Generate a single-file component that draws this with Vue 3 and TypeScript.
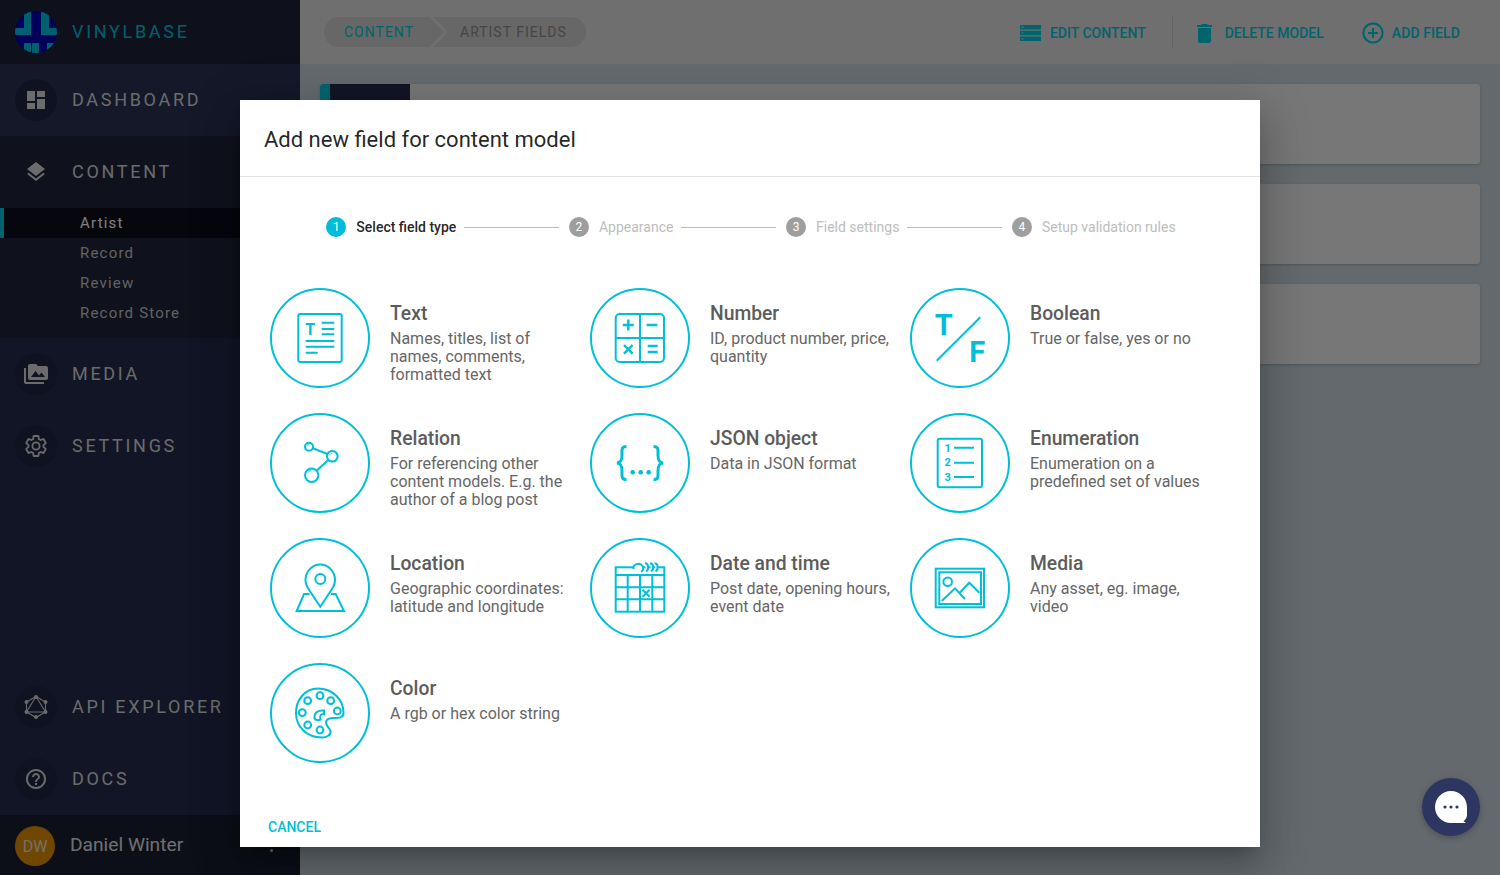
<script setup lang="ts">
interface Field { title: string; desc: string; icon: string }
interface Nav { label: string; icon: string; hot?: boolean; plain?: boolean }

const mi = (d: string) => `<path fill="currentColor" d="${d}"/>`

const top: Nav[] = [
  { label: 'DASHBOARD', hot: true, icon: mi('M3 13h8V3H3v10zm0 8h8v-6H3v6zm10 0h8V11h-8v10zm0-18v6h8V3h-8z') },
]
const content: Nav = { label: 'CONTENT', plain: true, icon: mi('M11.99 18.54l-7.37-5.73L3 14.07l9 7 9-7-1.63-1.27-7.38 5.74zM12 16l7.36-5.73L21 9l-9-7-9 7 1.63 1.27L12 16z') }
const subs = ['Artist', 'Record', 'Review', 'Record Store']
const mid: Nav[] = [
  { label: 'MEDIA', icon: mi('M2 6H0v5h.01L0 20c0 1.1.9 2 2 2h18v-2H2V6zm20-2h-8l-2-2H6c-1.1 0-1.99.9-1.99 2L4 16c0 1.1.9 2 2 2h16c1.1 0 2-.9 2-2V6c0-1.1-.9-2-2-2zM7 15l4.5-6 3.5 4.51 2.5-3.01L21 15H7z') },
  { label: 'SETTINGS', icon: `<g fill="none" stroke="currentColor" stroke-width="1.8"><path d="M19.43 12.98c.04-.32.07-.64.07-.98s-.03-.66-.07-.98l2.11-1.65c.19-.15.24-.42.12-.64l-2-3.46c-.12-.22-.39-.3-.61-.22l-2.49 1c-.52-.4-1.08-.73-1.69-.98l-.38-2.65C14.46 2.18 14.25 2 14 2h-4c-.25 0-.46.18-.49.42l-.38 2.65c-.61.25-1.17.59-1.69.98l-2.49-1c-.23-.09-.49 0-.61.22l-2 3.46c-.13.22-.07.49.12.64l2.11 1.65c-.04.32-.07.65-.07.98s.03.66.07.98l-2.11 1.65c-.19.15-.24.42-.12.64l2 3.46c.12.22.39.3.61.22l2.49-1c.52.4 1.08.73 1.69.98l.38 2.65c.03.24.24.42.49.42h4c.25 0 .46-.18.49-.42l.38-2.65c.61-.25 1.17-.59 1.69-.98l2.49 1c.23.09.49 0 .61-.22l2-3.46c.12-.22.07-.49-.12-.64l-2.11-1.65z"/><circle cx="12" cy="12" r="3.6"/></g>` },
]
const bottom: Nav[] = [
  { label: 'API EXPLORER', icon: `<g fill="none" stroke="currentColor" stroke-width="1.1"><path d="M12 1.5 21.5 7v10L12 22.5 2.5 17V7zM12 1.5 21.5 17H2.5z"/></g><g fill="currentColor"><circle cx="12" cy="2" r="2"/><circle cx="21.5" cy="7" r="2"/><circle cx="21.5" cy="17" r="2"/><circle cx="12" cy="22" r="2"/><circle cx="2.5" cy="17" r="2"/><circle cx="2.5" cy="7" r="2"/></g>` },
  { label: 'DOCS', icon: mi('M11 18h2v-2h-2v2zm1-16C6.48 2 2 6.48 2 12s4.48 10 10 10 10-4.48 10-10S17.52 2 12 2zm0 18c-4.41 0-8-3.59-8-8s3.59-8 8-8 8 3.59 8 8-3.59 8-8 8zm0-14c-2.21 0-4 1.79-4 4h2c0-1.1.9-2 2-2s2 .9 2 2c0 2-3 1.75-3 5h2c0-2.25 3-2.5 3-5 0-2.21-1.79-4-4-4z') },
]

const steps = ['Select field type', 'Appearance', 'Field settings', 'Setup validation rules']

const label = (x: number, y: number, size: number, t: string, anchor = 'middle') =>
  `<text x="${x}" y="${y}" font-size="${size}" font-family="Roboto" font-weight="700" fill="currentColor" stroke="none" text-anchor="${anchor}">${t}</text>`

const fields: Field[] = [
  { title: 'Text', desc: 'Names, titles, list of names, comments, formatted text', icon:
    `<rect x="28.3" y="26" width="43.4" height="48" rx="2"/><path d="M51.7 34.7h12.6M51.7 41h12.6M51.7 46.3h12.6M35.7 53h28.6M35.7 58.7h28.6M35.7 64.7h12"/>` + label(40.3, 46.5, 16, 'T') },
  { title: 'Number', desc: 'ID, product number, price, quantity', icon:
    `<rect x="25.7" y="26" width="48.3" height="48" rx="4"/><path d="M50 26v48M25.7 50H74"/><g stroke-width="2.4"><path d="M32.8 37h11M38.3 31.5v11M56.7 37h10.6M34 57l8.6 8.6M42.6 57 34 65.6M57.7 58h10M57.7 64h10"/></g>` },
  { title: 'Boolean', desc: 'True or false, yes or no', icon:
    `<path d="M26.7 72.7 70.3 29.3"/>` + label(33.8, 47, 29, 'T') + label(67.2, 74.3, 29, 'F') },
  { title: 'Relation', desc: 'For referencing other content models. E.g. the author of a blog post', icon:
    `<circle cx="39" cy="33.7" r="4"/><circle cx="62.3" cy="43.3" r="5.3"/><circle cx="41.7" cy="62.3" r="6.7"/><path d="M42.8 35.3 57.5 41M58.2 47 46.6 57.7"/><g stroke-width="1"><path d="M37 32.5a2.4 2.4 0 0 1 1.6-1M59.8 41.5a3.2 3.2 0 0 1 2-1.3M38 59.5a4.4 4.4 0 0 1 2.8-2"/></g>` },
  { title: 'JSON object', desc: 'Data in JSON format', icon:
    `<g stroke-width="3"><path d="M36.5 33.5C31 33.5 32 37 32 42 32 47 31 49.5 27 50 31 50.5 32 53 32 58 32 63 31 66.5 36.5 66.5"/><path d="M63.5 33.5C69 33.5 68 37 68 42 68 47 69 49.5 73 50 69 50.5 68 53 68 58 68 63 69 66.5 63.5 66.5"/></g><g fill="currentColor" stroke="none"><circle cx="42.7" cy="59.3" r="2.3"/><circle cx="50.7" cy="59.3" r="2.3"/><circle cx="58.7" cy="59.3" r="2.3"/></g>` },
  { title: 'Enumeration', desc: 'Enumeration on a predefined set of values', icon:
    `<rect x="27.7" y="25.7" width="44.3" height="48.6" rx="2"/><path d="M44 34.7h20M44 49.7h20M44 64h20"/>` + label(37.7, 38.7, 11, '1') + label(37.7, 53.4, 11, '2') + label(37.7, 68, 11, '3') },
  { title: 'Location', desc: 'Geographic coordinates: latitude and longitude', icon:
    `<circle cx="50.3" cy="41" r="5"/><path d="M50.3 68.7 39.5 52.5C37 49 35.5 46 35.5 42 35.5 33.5 42 26.5 50.3 26.5S65 33.5 65 42C65 46 63.5 49 61 52.5Z"/><path d="M39.5 56H34L26.7 73H74L65.7 56H61"/>` },
  { title: 'Date and time', desc: 'Post date, opening hours, event date', icon:
    `<rect x="25.7" y="29.3" width="48.6" height="44.4"/><path d="M25.7 37H74.3M25.7 49.3H74.3M25.7 61.3H74.3M37.7 37V73.7M50 37V73.7M62.3 37V73.7M52.5 51.8 59.5 58.8M59.5 51.8 52.5 58.8"/><path fill="#fff" d="M43.5 31C42.5 26 50 24 52.5 28 54 30.5 53 33 51 33.7"/><path fill="#fff" d="M55 25.3C58.5 25.3 59.5 31.5 56 33.5M60 25.3C63.5 25.3 64.5 31.5 61 33.5M64.5 25.3C68 25.3 69 31.5 65.5 33.5"/>` },
  { title: 'Media', desc: 'Any asset, eg. image, video', icon:
    `<rect x="25.7" y="30.7" width="48.3" height="38.6"/><rect x="29.3" y="34.3" width="41.7" height="31.7"/><circle cx="37.7" cy="43.7" r="4.3"/><path d="M31.7 63 45 50.3 55 61M49.3 55.3 59.3 44.7 69.3 54.7"/>` },
  { title: 'Color', desc: 'A rgb or hex color string', icon:
    `<path d="M48 25.5C34 25.5 26 38 26 50 26 64 37 74.5 52 74.5 57 74.5 61 72 60.5 68 60 65 55.5 63 56 59 56.5 55.5 60 55 64 55 69 55 73.5 55 73.5 50 73.5 36 62 25.5 48 25.5Z"/><circle cx="37.7" cy="37.7" r="3.4"/><circle cx="50" cy="32.7" r="3.4"/><circle cx="60.7" cy="37.7" r="3.4"/><circle cx="67.3" cy="48" r="3.4"/><circle cx="32.3" cy="49.7" r="3.4"/><circle cx="37.7" cy="62" r="3.4"/><circle cx="50" cy="67" r="3.4"/><path d="M44.5 55C44 49.5 48 47 54 47.5V51C51 50.5 49.5 52.5 50.5 56.5 48.5 57.5 45 57.5 44.5 55Z"/>` },
]
</script>

<template>
  <div class="page">
    <aside class="side">
      <div class="brand">
        <svg class="logo" viewBox="0 0 42 42">
          <defs><clipPath id="lc"><circle cx="21" cy="21" r="21" /></clipPath></defs>
          <g clip-path="url(#lc)">
            <rect width="42" height="42" fill="#0000b4" />
            <path fill="#00c0e0" d="M9 0h7v24H0v-7h9zM26 0h8v17h8v7H26zM9 32h7v10H9zM17 32h7v10h-7zM32 32h8v10h-8z" />
          </g>
        </svg>
        <span class="brand-name">VINYLBASE</span>
      </div>
      <div v-for="n in top" :key="n.label" class="nav hot">
        <span class="nav-ic"><svg viewBox="0 0 24 24" v-html="n.icon" /></span>
        <span class="nav-txt">{{ n.label }}</span>
      </div>
      <div class="group">
        <div class="nav">
          <span class="nav-ic plain"><svg viewBox="0 0 24 24" v-html="content.icon" /></span>
          <span class="nav-txt">{{ content.label }}</span>
        </div>
        <ul class="subs">
          <li v-for="(s, i) in subs" :key="s" :class="{ on: i === 0 }">{{ s }}</li>
        </ul>
      </div>
      <div v-for="n in mid" :key="n.label" class="nav">
        <span class="nav-ic"><svg viewBox="0 0 24 24" v-html="n.icon" /></span>
        <span class="nav-txt">{{ n.label }}</span>
      </div>
      <div class="spring"></div>
      <div v-for="n in bottom" :key="n.label" class="nav">
        <span class="nav-ic"><svg viewBox="0 0 24 24" v-html="n.icon" /></span>
        <span class="nav-txt">{{ n.label }}</span>
      </div>
      <div class="user">
        <span class="avatar">DW</span>
        <span class="user-name">Daniel Winter</span>
        <span class="kebab"></span>
      </div>
    </aside>

    <main class="main">
      <header class="head">
        <div class="crumbs">
          <span class="crumb first">CONTENT</span>
          <svg class="chev" viewBox="0 0 20 30"><path d="M3-1 19.5 15 3 31" /></svg>
          <span class="crumb">ARTIST FIELDS</span>
        </div>
        <div class="actions">
          <a class="act">
            <svg class="a-ic edit" viewBox="0 0 21 16"><path fill-rule="evenodd" d="M0 0h21v4.4H0zM1.5 1.6h2v1.2h-2zM0 5.8h21v4.4H0zM1.5 7.4h2v1.2h-2zM0 11.6h21V16H0zM1.5 13.2h2v1.2h-2z" /></svg>
            EDIT CONTENT
          </a>
          <span class="sep"></span>
          <a class="act del">
            <svg class="a-ic trash" viewBox="0 0 15 19"><path d="M5 0h5l.7 1H15v2H0V1h4.3zM1 4h13v13a2 2 0 0 1-2 2H3a2 2 0 0 1-2-2z" /></svg>
            DELETE MODEL
          </a>
          <a class="act add">
            <svg class="a-ic plus" viewBox="0 0 22 22"><circle cx="11" cy="11" r="9.6" /><path d="M11 6v10M6 11h10" /></svg>
            ADD FIELD
          </a>
        </div>
      </header>
      <section class="cards">
        <div v-for="c in 3" :key="c" class="card">
          <span class="accent"></span>
          <span class="thumb"></span>
        </div>
      </section>
    </main>

    <div class="scrim">
      <div class="modal">
        <h2 class="m-title">Add new field for content model</h2>
        <div class="m-body">
          <ol class="stepper">
            <template v-for="(s, i) in steps" :key="s">
              <li class="step" :class="{ active: i === 0 }">
                <span class="dot">{{ i + 1 }}</span>
                <span>{{ s }}</span>
              </li>
              <li v-if="i < steps.length - 1" class="rule"></li>
            </template>
          </ol>
          <div class="grid">
            <div v-for="f in fields" :key="f.title" class="field">
              <span class="disc"><svg viewBox="0 0 100 100" v-html="f.icon" /></span>
              <div class="f-txt">
                <div class="f-title">{{ f.title }}</div>
                <div class="f-desc">{{ f.desc }}</div>
              </div>
            </div>
          </div>
        </div>
        <div class="m-foot"><button class="cancel">CANCEL</button></div>
      </div>
    </div>

    <button class="chat" aria-label="Chat">
      <svg viewBox="0 0 32 32"><path fill="#fff" d="M16 0C7.2 0 0 7.2 0 16s7.2 16 16 16h14.5l.3-.3-2.4-1.4c2.2-1.4 3.6-4 3.6-6.3V16C32 7.2 24.8 0 16 0Z" /><circle cx="10" cy="16" r="1.6" fill="#2d3561" /><circle cx="16" cy="16" r="1.6" fill="#2d3561" /><circle cx="22" cy="16" r="1.6" fill="#2d3561" /></svg>
    </button>
  </div>
</template>

<style>
html, body { margin: 0; height: 100%; overflow: hidden; }
</style>

<style scoped>
* { box-sizing: border-box; }
.page {
  position: relative;
  display: flex;
  width: 100%;
  height: 100vh;
  overflow: hidden;
  font-family: Roboto, "Liberation Sans", sans-serif;
  background: #c6d2da;
}

/* sidebar */
.side {
  width: 300px;
  flex: none;
  display: flex;
  flex-direction: column;
  background: #242b4a;
  color: #d6d6d6;
}
.brand {
  height: 64px;
  flex: none;
  display: flex;
  align-items: center;
  padding-left: 15px;
  background: #1c2138;
}
.logo { width: 42px; height: 42px; flex: none; }
.brand-name {
  margin: -2px 0 0 15px;
  font-size: 18px;
  letter-spacing: 2.7px;
  color: #00c0d8;
}
.nav {
  height: 72px;
  flex: none;
  display: flex;
  align-items: center;
  padding-left: 15px;
}
.hot { background: #283052; }
.nav-ic {
  width: 42px;
  height: 42px;
  flex: none;
  border-radius: 50%;
  display: flex;
  align-items: center;
  justify-content: center;
  background: #1e2540;
  color: #d6d6d6;
}
.nav-ic.plain { background: transparent; }
.nav-ic svg { width: 24px; height: 24px; display: block; }
.nav-txt {
  margin: -2px 0 0 15px;
  font-size: 18px;
  letter-spacing: 2.7px;
  white-space: nowrap;
}
.group { background: #1e233a; }
.subs { list-style: none; margin: 0; padding: 0 0 10px; }
.subs li {
  height: 30px;
  padding-left: 80px;
  font-size: 15px;
  line-height: 31px;
  letter-spacing: 1.2px;
  color: #c4c4c4;
}
.subs li.on {
  color: #fff;
  background: #0a0e1a;
  border-left: 4px solid #00c8dc;
  padding-left: 76px;
}
.spring { flex: 1; }
.user {
  height: 60px;
  flex: none;
  position: relative;
  display: flex;
  align-items: center;
  padding-left: 15px;
  background: #181d30;
}
.avatar {
  width: 40px;
  height: 40px;
  margin-top: 2px;
  border-radius: 50%;
  background: #e08e00;
  color: #e6e0d4;
  display: flex;
  align-items: center;
  justify-content: center;
  font-size: 16px;
}
.user-name { margin: -2px 0 0 15px; font-size: 19.2px; color: #e0e0e0; }
.kebab {
  position: absolute;
  left: 270px;
  top: 34px;
  width: 3px;
  height: 3px;
  border-radius: 50%;
  background: #e0e0e0;
  box-shadow: 0 -6px 0 #e0e0e0, 0 -12px 0 #e0e0e0;
}

/* main */
.main { flex: 1; display: flex; flex-direction: column; min-width: 0; }
.head {
  height: 64px;
  flex: none;
  display: flex;
  align-items: center;
  justify-content: space-between;
  padding: 0 40px 0 24px;
  background: #dedede;
}
.crumbs {
  position: relative;
  height: 30px;
  width: 262px;
  display: flex;
  align-items: center;
  border-radius: 15px;
  background: #cecece;
  font-size: 14px;
  letter-spacing: 1px;
}
.crumb { color: #8a8a8a; }
.crumb.first { color: #00c8dc; margin: 0 46px 0 20px; }
.chev {
  position: absolute;
  left: 103px;
  top: 0;
  width: 20px;
  height: 30px;
  fill: none;
  stroke: #dedede;
  stroke-width: 3;
}
.actions { display: flex; align-items: center; }
.act {
  display: flex;
  align-items: center;
  padding-top: 2px;
  font-size: 14px;
  font-weight: 500;
  color: #00c8dc;
  white-space: nowrap;
}
.a-ic { display: block; flex: none; fill: #00c8dc; }
.edit { width: 21px; height: 16px; margin-right: 9px; }
.trash { width: 15px; height: 19px; margin-right: 13px; }
.plus { width: 22px; height: 22px; margin-right: 8px; fill: none; stroke: #00c8dc; stroke-width: 2; }
.sep { width: 1px; height: 32px; background: #c8c8c8; margin: 0 24px 0 26px; }
.add { margin-left: 38px; letter-spacing: .1px; }
.cards {
  display: flex;
  flex-direction: column;
  gap: 20px;
  padding: 20px 20px 0;
}
.card {
  height: 80px;
  display: flex;
  border-radius: 3px;
  overflow: hidden;
  background: #eeeeee;
  box-shadow: 0 1px 3px rgba(0, 0, 0, .2);
}
.accent { width: 10px; background: #00c8dc; }
.thumb { width: 80px; background: #242b4a; }

/* modal */
.scrim {
  position: absolute;
  inset: 0;
  display: flex;
  justify-content: center;
  padding-top: 100px;
  background: rgba(0, 0, 0, .5);
}
.modal {
  width: 1020px;
  height: 747px;
  display: flex;
  flex-direction: column;
  background: #fff;
  box-shadow: 0 11px 15px -7px rgba(0, 0, 0, .2), 0 24px 38px 3px rgba(0, 0, 0, .14), 0 9px 46px 8px rgba(0, 0, 0, .12);
}
.m-title {
  margin: 0;
  height: 77px;
  flex: none;
  padding: 0 24px;
  font-size: 22px;
  font-weight: 400;
  line-height: 80px;
  color: rgba(0, 0, 0, .87);
  border-bottom: 1px solid #e2e2e2;
}
.m-body { flex: 1; padding: 40px 30px 0; }
.stepper {
  list-style: none;
  margin: 0 0 51px;
  padding: 0 0 0 2px;
  display: flex;
  align-items: center;
  justify-content: center;
  height: 20px;
}
.step {
  display: flex;
  align-items: center;
  gap: 10px;
  font-size: 14px;
  color: #bdbdbd;
  white-space: nowrap;
}
.step.active { color: rgba(0, 0, 0, .87); font-weight: 500; }
.dot {
  width: 20px;
  height: 20px;
  border-radius: 50%;
  background: #9e9e9e;
  color: #fff;
  font-size: 12px;
  font-weight: 400;
  line-height: 20px;
  text-align: center;
}
.active .dot { background: #00bcd8; }
.rule { width: 95px; height: 1px; margin: 0 9.6px 0 8px; background: #bdbdbd; }
.grid {
  display: grid;
  grid-template-columns: repeat(3, 320px);
  grid-auto-rows: 100px;
  row-gap: 25px;
}
.field { display: flex; }
.disc {
  width: 100px;
  height: 100px;
  flex: none;
  border: 2px solid #00bfd8;
  border-radius: 50%;
  color: #00bfd8;
}
.disc svg {
  display: block;
  margin: -2px;
  width: 100px;
  height: 100px;
  fill: none;
  stroke: currentColor;
  stroke-width: 2;
}
.f-txt { margin-left: 20px; padding-top: 15px; width: 182px; }
.f-title {
  font-size: 19.3px;
  font-weight: 500;
  line-height: 22px;
  color: #5c5c5c;
  white-space: nowrap;
}
.f-desc {
  margin-top: 5px;
  font-size: 16px;
  line-height: 18px;
  color: #666;
}
.m-foot { flex: none; height: 48px; padding: 8px 0 0 20px; }
.cancel {
  border: 0;
  background: none;
  padding: 0 8px;
  height: 40px;
  font: 500 14px Roboto, "Liberation Sans", sans-serif;
  color: #00bfd8;
}

/* chat */
.chat {
  position: absolute;
  left: 1422px;
  top: 778px;
  width: 58px;
  height: 58px;
  border: 0;
  border-radius: 50%;
  padding: 13px;
  background: #2d3561;
  box-shadow: 0 2px 6px rgba(0, 0, 0, .25);
}
.chat svg { display: block; width: 32px; height: 32px; }
</style>
